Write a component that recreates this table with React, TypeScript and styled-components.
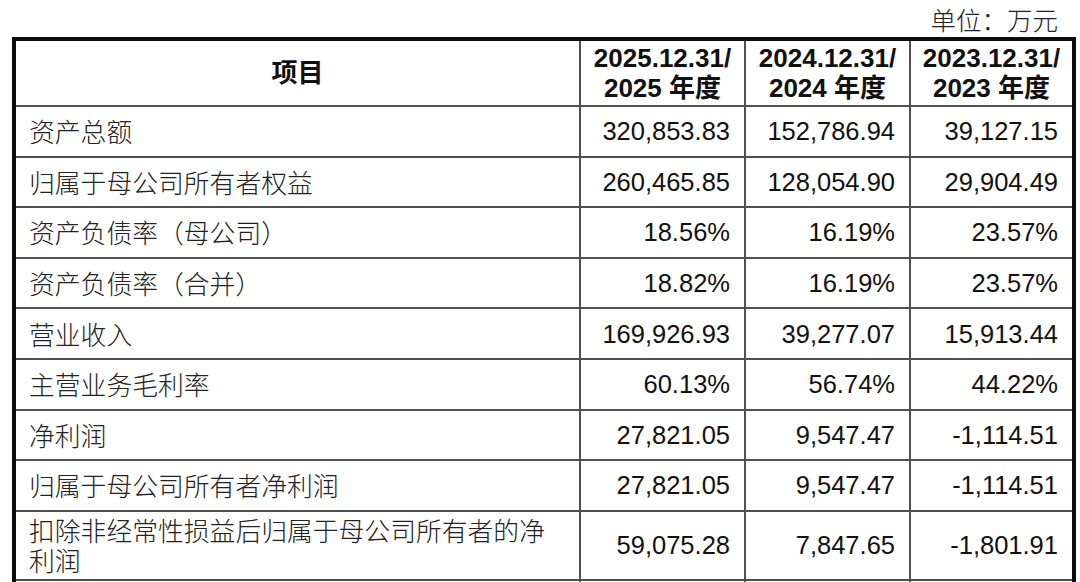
import React from "react";
import styled, { createGlobalStyle } from "styled-components";

const GlobalStyle = createGlobalStyle`
  html, body {
    margin: 0;
    padding: 0;
    background: #ffffff;
  }
  body {
    font-family: "Liberation Sans", "Noto Sans CJK SC", sans-serif;
    color: #111111;
  }
`;

type DataRow = { label: string; values: string[]; tall?: boolean };

const years = ["2025", "2024", "2023"];

const rows: DataRow[] = [
  { label: "资产总额", values: ["320,853.83", "152,786.94", "39,127.15"] },
  { label: "归属于母公司所有者权益", values: ["260,465.85", "128,054.90", "29,904.49"] },
  { label: "资产负债率（母公司）", values: ["18.56%", "16.19%", "23.57%"] },
  { label: "资产负债率（合并）", values: ["18.82%", "16.19%", "23.57%"] },
  { label: "营业收入", values: ["169,926.93", "39,277.07", "15,913.44"] },
  { label: "主营业务毛利率", values: ["60.13%", "56.74%", "44.22%"] },
  { label: "净利润", values: ["27,821.05", "9,547.47", "-1,114.51"] },
  { label: "归属于母公司所有者净利润", values: ["27,821.05", "9,547.47", "-1,114.51"] },
  {
    label: "扣除非经常性损益后归属于母公司所有者的净利润",
    values: ["59,075.28", "7,847.65", "-1,801.91"],
    tall: true,
  },
];

const App: React.FC = () => {
  return (
    <>
      <GlobalStyle />
      <Page>
        <Unit>单位：万元</Unit>
        <Table>
          <colgroup>
            <col style={{ width: 566 }} />
            <col style={{ width: 165 }} />
            <col style={{ width: 165 }} />
            <col style={{ width: 164 }} />
          </colgroup>
          <thead>
            <HeadRow>
              <HeadCell>项目</HeadCell>
              {years.map((y) => (
                <HeadCell key={y}>
                  {y}.12.31/
                  <br />
                  {y} 年度
                </HeadCell>
              ))}
            </HeadRow>
          </thead>
          <tbody>
            {rows.map((row) => (
              <BodyRow key={row.label} $tall={row.tall}>
                <LabelCell>{row.label}</LabelCell>
                {row.values.map((v, i) => (
                  <NumCell key={i}>{v}</NumCell>
                ))}
              </BodyRow>
            ))}
            <BodyRow>
              <LabelCell />
              <NumCell />
              <NumCell />
              <NumCell />
            </BodyRow>
          </tbody>
        </Table>
      </Page>
    </>
  );
};

const Page = styled.div`
  width: 1080px;
  height: 582px;
  overflow: hidden;
  box-sizing: border-box;
`;

const Unit = styled.div`
  height: 37px;
  width: 1072px;
  box-sizing: border-box;
  padding-right: 14px;
  text-align: right;
  font-family: "Noto Sans CJK SC", sans-serif;
  font-size: 25.5px;
  font-weight: 300;
  line-height: 38px;
  color: #222222;
`;

const Table = styled.table`
  margin-left: 12px;
  width: 1060px;
  table-layout: fixed;
  border-collapse: collapse;
  border-top: 4px solid #0d0d0d;
  border-left: 4px solid #0d0d0d;
  border-right: 4px solid #0d0d0d;
`;

const HeadRow = styled.tr`
  height: 67px;
`;

const HeadCell = styled.th`
  border: 2px solid #505050;
  padding: 0;
  text-align: center;
  vertical-align: middle;
  font-size: 26px;
  line-height: 30px;
  font-weight: 700;
  color: #111111;
`;

const BodyRow = styled.tr<{ $tall?: boolean }>`
  height: ${(p) => (p.$tall ? "69px" : "50.6px")};
`;

const LabelCell = styled.td`
  border: 2px solid #505050;
  padding: 0 13px;
  text-align: left;
  vertical-align: middle;
  font-family: "Noto Sans CJK SC", sans-serif;
  font-size: 25.8px;
  font-weight: 300;
  line-height: 30px;
  color: #222222;
  word-break: break-all;
`;

const NumCell = styled.td`
  border: 2px solid #505050;
  padding: 0 14px 0 0;
  text-align: right;
  vertical-align: middle;
  font-size: 25.5px;
  line-height: 30px;
  color: #111111;
  white-space: nowrap;
`;

export default App;
